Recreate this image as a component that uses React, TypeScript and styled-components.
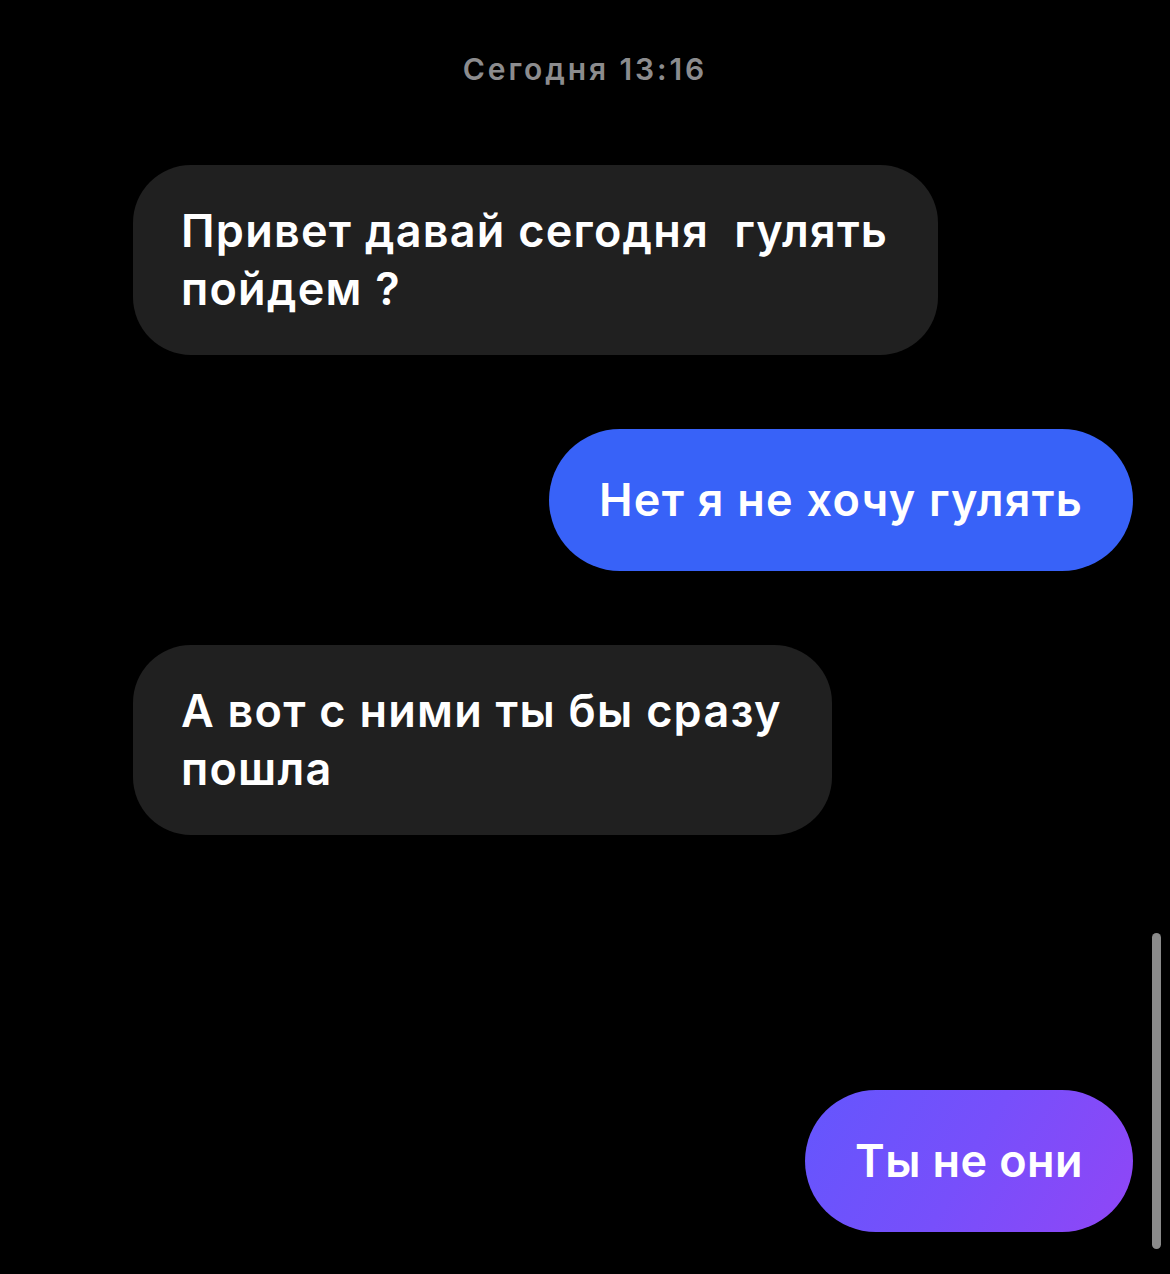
import styled, { createGlobalStyle } from "styled-components";

const GlobalStyle = createGlobalStyle`
  html, body {
    margin: 0;
    padding: 0;
    background: #000;
  }
  body {
    font-family: Inter, "Noto Sans", sans-serif;
    -webkit-font-smoothing: antialiased;
  }
`;

const Screen = styled.div`
  position: relative;
  height: 100vh;
  box-sizing: border-box;
  padding: 50px 37px 42px 133px;
  display: flex;
  flex-direction: column;
  gap: 74px;
  overflow: hidden;
`;

const Stamp = styled.div`
  align-self: center;
  margin-left: -96px;
  color: #8c8c8e;
  font-size: 30px;
  font-weight: 600;
  letter-spacing: 2.9px;
  line-height: 38px;
  margin-bottom: 3px;
`;

const Bubble = styled.div<{ $out?: boolean; $grad?: boolean }>`
  align-self: ${(p) => (p.$out ? "flex-end" : "flex-start")};
  box-sizing: border-box;
  min-height: 142px;
  display: flex;
  align-items: center;
  padding: 37px 50px 37px ${(p) => (p.$out ? 50 : 48)}px;
  border-radius: ${(p) => (p.$out ? "71px" : "58px")};
  background: ${(p) =>
    p.$grad
      ? "linear-gradient(120deg, #6456fd 0%, #774ffb 50%, #9046f6 100%)"
      : p.$out
      ? "#3862f8"
      : "#202020"};
  color: #fff;
  font-size: 45px;
  font-weight: 600;
  letter-spacing: 1.25px;
  line-height: 58px;
  white-space: pre;
`;

const Bottom = styled(Bubble)`
  margin-top: auto;
  letter-spacing: 0.4px;
`;

const ScrollThumb = styled.div`
  position: absolute;
  right: 9px;
  top: 933px;
  width: 9px;
  height: 316px;
  border-radius: 5px;
  background: #8a8a8a;
`;

export default function App() {
  return (
    <>
      <GlobalStyle />
      <Screen>
        <Stamp>Сегодня 13:16</Stamp>
        <Bubble>{"Привет давай сегодня  гулять\nпойдем ?"}</Bubble>
        <Bubble $out>Нет я не хочу гулять</Bubble>
        <Bubble>{"А вот с ними ты бы сразу\nпошла"}</Bubble>
        <Bottom $out $grad>
          Ты не они
        </Bottom>
        <ScrollThumb />
      </Screen>
    </>
  );
}
